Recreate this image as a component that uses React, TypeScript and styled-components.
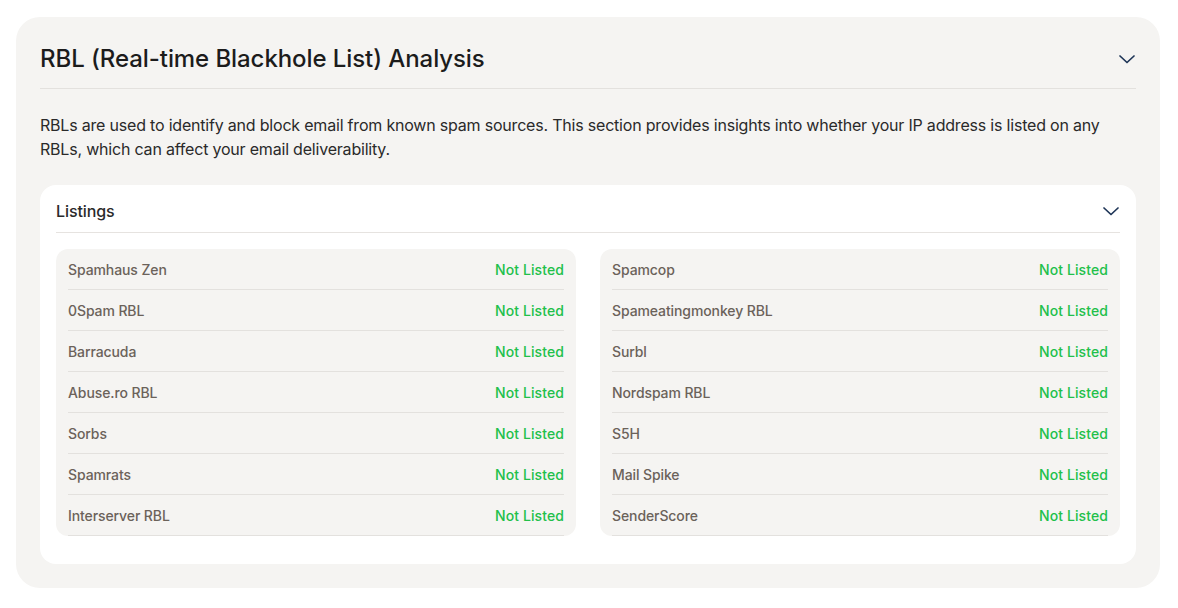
import React from "react";
import styled, { createGlobalStyle } from "styled-components";

const Global = createGlobalStyle`
  html, body { margin: 0; padding: 0; background: #ffffff; }
  body { font-family: Inter, "Noto Sans", sans-serif; -webkit-font-smoothing: antialiased; }
  * { box-sizing: border-box; }
`;

const Page = styled.div`
  padding: 17px 18px 20px 16px;
`;

const Card = styled.section`
  background: #f5f4f2;
  border-radius: 24px;
  padding: 20px 24px 24px;
  width: 1144px;
`;

const Header = styled.div`
  display: flex;
  align-items: center;
  justify-content: space-between;
  height: 52px;
  border-bottom: 1px solid #e3e1de;
`;

const Title = styled.h2`
  margin: 0 0 8px;
  font-size: 24px;
  font-weight: 500;
  letter-spacing: -0.08px;
  color: #1c1c1c;
`;

const Chevron = styled.svg<{ $mb?: number }>`
  width: 18px;
  height: 18px;
  margin-bottom: ${(p) => p.$mb ?? 0}px;
  color: #1e3557;
  flex: none;
`;

const Desc = styled.p`
  margin: 24px 0 24px;
  font-size: 16px;
  line-height: 24px;
  color: #2a2a2a;
  letter-spacing: -0.2px;
`;

const Inner = styled.div`
  background: #ffffff;
  border-radius: 16px;
  padding: 12px 16px 28px;
`;

const InnerHeader = styled.div`
  display: flex;
  align-items: center;
  justify-content: space-between;
  height: 36px;
  border-bottom: 1px solid #e6e3e0;
`;

const InnerTitle = styled.h3`
  margin: 0 0 8px;
  font-size: 16px;
  font-weight: 500;
  color: #2a2a2a;
  letter-spacing: -0.1px;
`;

const Grid = styled.div`
  display: grid;
  grid-template-columns: 1fr 1fr;
  gap: 24px;
  margin-top: 16px;
`;

const Panel = styled.div`
  background: #f5f4f2;
  border-radius: 12px;
  padding: 0 12px;
`;

const Row = styled.div`
  display: flex;
  align-items: center;
  justify-content: space-between;
  height: 41px;
  border-bottom: 1px solid #e3e1de;
  font-size: 14px;
  letter-spacing: -0.1px;
`;

const Name = styled.span`
  color: #6b625a;
  font-weight: 500;
`;

const Status = styled.span`
  color: #22c04a;
  font-weight: 500;
  letter-spacing: 0.1px;
`;

const left = ["Spamhaus Zen", "0Spam RBL", "Barracuda", "Abuse.ro RBL", "Sorbs", "Spamrats", "Interserver RBL"];
const right = ["Spamcop", "Spameatingmonkey RBL", "Surbl", "Nordspam RBL", "S5H", "Mail Spike", "SenderScore"];

const ChevronIcon = ({ mb }: { mb?: number }) => (
  <Chevron $mb={mb} viewBox="0 0 18 18" fill="none">
    <path d="M2 6 L9 12.5 L16 6" stroke="currentColor" strokeWidth="1.7" strokeLinecap="round" strokeLinejoin="round" />
  </Chevron>
);

const List = ({ items }: { items: string[] }) => (
  <Panel>
    {items.map((n) => (
      <Row key={n}>
        <Name>{n}</Name>
        <Status>Not Listed</Status>
      </Row>
    ))}
  </Panel>
);

export default function App() {
  return (
    <>
      <Global />
      <Page>
        <Card>
          <Header>
            <Title>RBL (Real-time Blackhole List) Analysis</Title>
            <ChevronIcon mb={8} />
          </Header>
          <Desc>
            RBLs are used to identify and block email from known spam sources. This section provides insights into whether your IP address is listed on any RBLs, which can affect your email deliverability.
          </Desc>
          <Inner>
            <InnerHeader>
              <InnerTitle>Listings</InnerTitle>
              <ChevronIcon mb={8} />
            </InnerHeader>
            <Grid>
              <List items={left} />
              <List items={right} />
            </Grid>
          </Inner>
        </Card>
      </Page>
    </>
  );
}
